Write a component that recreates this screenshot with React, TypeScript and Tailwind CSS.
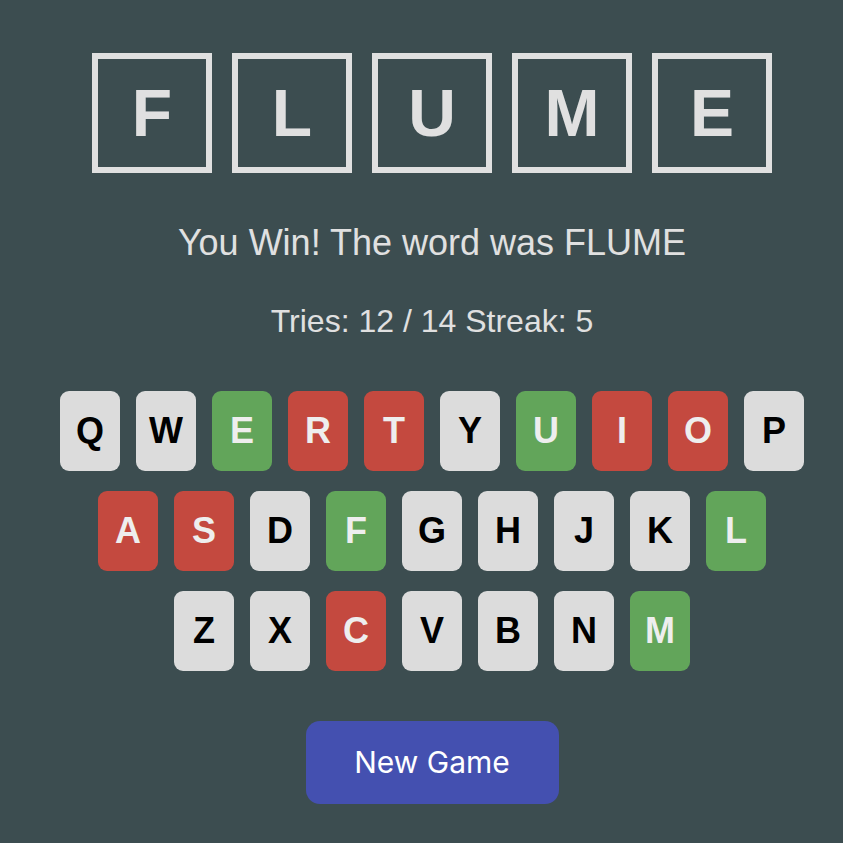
import React from "react";

const rows: string[][] = [
  ["Q", "W", "E", "R", "T", "Y", "U", "I", "O", "P"],
  ["A", "S", "D", "F", "G", "H", "J", "K", "L"],
  ["Z", "X", "C", "V", "B", "N", "M"],
];

const green = new Set(["E", "U", "F", "L", "M"]);
const red = new Set(["R", "T", "I", "O", "A", "S", "C"]);

function Key({ k }: { k: string }) {
  const cls = green.has(k)
    ? "bg-[#62a55a] text-[#eeeeee]"
    : red.has(k)
    ? "bg-[#c4493f] text-[#eeeeee]"
    : "bg-[#dcdcdc] text-black";
  return (
    <div
      className={`w-[60px] h-[80px] rounded-[9px] flex items-center justify-center font-bold text-[36px] font-['Liberation_Sans',Arial,sans-serif] ${cls}`}
    >
      {k}
    </div>
  );
}

export default function App() {
  return (
    <div className="min-h-[843px] w-full bg-[#3c4d50] pl-[21px] flex flex-col items-center font-['Liberation_Sans',Arial,sans-serif]">
      <div className="flex gap-[20px] mt-[53px]">
        {"FLUME".split("").map((c, i) => (
          <div
            key={i}
            className="w-[120px] h-[120px] border-[6px] border-[#e0e0e0] flex items-center justify-center text-[#e0e0e0] font-bold text-[66px]"
          >
            {c}
          </div>
        ))}
      </div>
      <div className="mt-[50px] text-[36px] leading-[40px] text-[#e0e0e0]">
        You Win! The word was FLUME
      </div>
      <div className="mt-[38px] text-[32px] leading-[40px] text-[#e0e0e0]">
        Tries: 12 / 14 Streak: 5
      </div>
      <div className="mt-[50px] flex flex-col items-center gap-[20px]">
        {rows.map((r, i) => (
          <div key={i} className="flex gap-[16px]">
            {r.map((k) => (
              <Key key={k} k={k} />
            ))}
          </div>
        ))}
      </div>
      <button className="mt-[50px] w-[253px] h-[83px] rounded-[14px] bg-[#4450b0] text-white text-[30px] font-['Inter','Noto_Sans',sans-serif]">
        New Game
      </button>
    </div>
  );
}
